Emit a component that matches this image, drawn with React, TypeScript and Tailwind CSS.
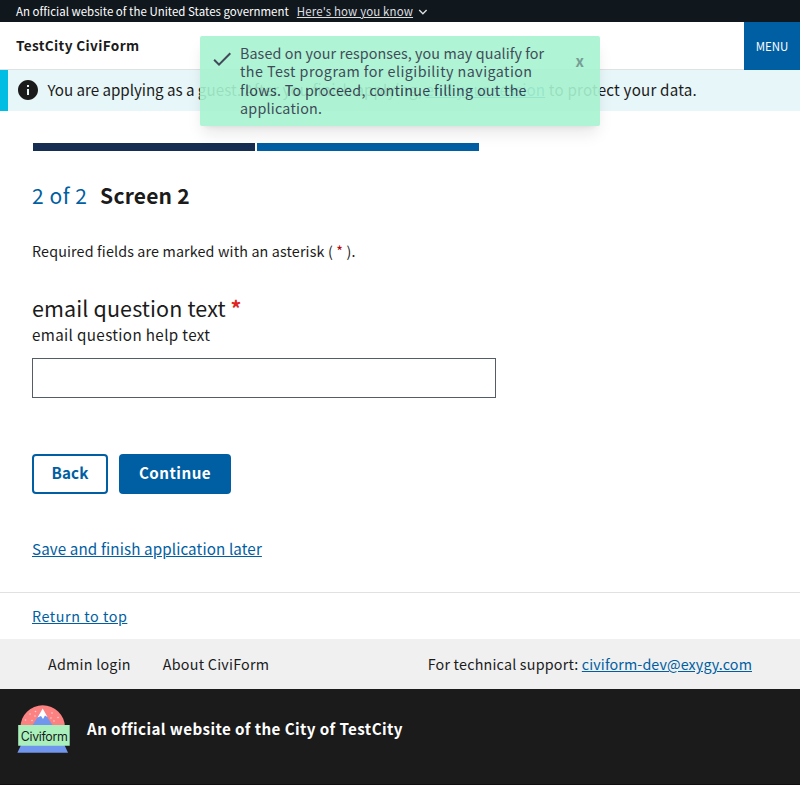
import type { ReactNode } from 'react'

const toastLines = [
  { text: 'Based on your responses, you may qualify for', tracking: 'tracking-[0.08px]' },
  { text: 'the Test program for eligibility navigation', tracking: 'tracking-[0.44px]' },
  { text: 'flows. To proceed, continue filling out the', tracking: 'tracking-[0.28px]' },
  { text: 'application.', tracking: 'tracking-[0.23px]' },
]

function Link({ children, className = '' }: { children: ReactNode; className?: string }) {
  return (
    <a href="#" className={`text-[#005ea2] underline ${className}`}>
      {children}
    </a>
  )
}

function GovBanner() {
  return (
    <div className="flex h-[22px] items-center bg-[#11181d] pl-4 text-[11.46px] leading-[22px] text-white">
      <span className="tracking-[0.02px]">An official website of the United States government</span>
      <button className="ml-2 flex h-[22px] items-center text-[#dcdee0]">
        <span className="tracking-[0.14px] underline">Here's how you know</span>
        <svg className="mt-0.5 ml-1 size-3" viewBox="0 0 24 24" fill="currentColor">
          <path d="M16.59 8.59 12 13.17 7.41 8.59 6 10l6 6 6-6z" transform="translate(-5 -5) scale(1.4)" />
        </svg>
      </button>
    </div>
  )
}

function Header() {
  return (
    <header className="flex h-12 justify-between">
      <div className="flex grow items-center border-b border-[#dfe1e2] pl-4 text-[13.6px] font-bold tracking-[0.36px]">
        TestCity CiviForm
      </div>
      <button className="w-14 bg-[#005ea2] pt-0.5 text-[11.46px] text-white">MENU</button>
    </header>
  )
}

function GuestAlert() {
  return (
    <div className="flex h-[41px] items-center border-l-8 border-[#00bde3] bg-[#e7f6f8] pb-0.5 pl-2">
      <svg className="size-6 shrink-0" viewBox="0 0 24 24" fill="currentColor">
        <path d="M12 2C6.48 2 2 6.48 2 12s4.480 10 10 10 10-4.480 10-10S17.520 2 12 2zm1 15h-2v-6h2v6zm0-8h-2V7h2v2z" />
      </svg>
      <p className="ml-[7.5px] text-[15.18px] whitespace-nowrap">
        <span className="-tracking-[0.04px]">You are applying as a </span>
        <span className="tracking-[0.09px]">
          guest. After you finish applying, <Link>end your session</Link>
        </span>
        <span className="tracking-[0.19px]"> to protect your data.</span>
      </p>
    </div>
  )
}

function Toast() {
  return (
    <div className="absolute top-[36px] left-[200px] flex h-[90px] w-[400px] rounded-xs bg-[#a7f3d0] text-[#2d3748] opacity-90 shadow-lg">
      <svg className="mt-[11px] ml-2.5 size-6 shrink-0" viewBox="0 0 24 24" fill="currentColor">
        <path d="M9 16.170 4.830 12l-1.420 1.410L9 19 21 7l-1.410-1.410z" />
      </svg>
      <p className="mt-2 ml-1.5 grow text-[14.32px] leading-[18.4px] whitespace-nowrap">
        {toastLines.map(({ text, tracking }) => (
          <span key={text} className={`block ${tracking}`}>
            {text}
          </span>
        ))}
      </p>
      <button className="mt-4 mr-4 h-[18px] text-[15px] leading-[18px] font-bold opacity-50">x</button>
    </div>
  )
}

function Logo() {
  return (
    <svg className="h-[50px] w-[54px]" viewBox="0 0 54 50">
      <path d="M4.500 22a22.200 21.700 0 0 1 44.400 0z" fill="#fc8181" />
      <path d="M26.500 4.500 37 21H16z" fill="#7096ee" />
      <path d="M26.700 3.500 31.500 12l-2.500-1.500-2 3.500-2-3-3.500 1.500z" fill="#fff" />
      <g fill="#fed0d0">
        <circle cx="19.500" cy="6.500" r=".8" />
        <circle cx="14" cy="9" r=".8" />
        <circle cx="19" cy="11" r=".8" />
        <circle cx="9.500" cy="15" r=".8" />
        <circle cx="16" cy="15.500" r=".8" />
        <circle cx="36" cy="8" r=".8" />
        <circle cx="35" cy="13" r=".8" />
        <circle cx="42" cy="12.500" r=".8" />
        <circle cx="38" cy="16" r=".8" />
      </g>
      <path d="M5 40h43.500l3.500 7.700H1.400z" fill="#7096ee" />
      <path d="M2.200 20h51.500v20.700H2.200z" fill="#a9f0bc" />
      <text x="4.800" y="35.500" fontSize="12.400" textLength="47" fill="#1b1b1b" fontFamily="Inter, sans-serif">
        Civiform
      </text>
    </svg>
  )
}

export default function App() {
  return (
    <div className="relative h-[785px] overflow-hidden bg-white font-['Noto_Sans_CJK_SC',sans-serif] text-[#1b1b1b]">
      <GovBanner />
      <Header />
      <GuestAlert />

      <main className="h-[481px] px-8 pt-8">
        <div className="flex gap-0.5 pl-px">
          <div className="h-2 w-[222px] bg-[#162e51]" />
          <div className="h-2 w-[222px] bg-[#005ea2]" />
        </div>
        <h1 className="mt-7 flex h-8 items-center text-[21px] leading-8">
          <span className="tracking-[0.55px] text-[#005ea2]">2 of 2</span>
          <span className="ml-[12.5px] font-bold tracking-[0.2px]">Screen 2</span>
        </h1>
        <p className="mt-7 h-6 text-[14.32px] leading-6 tracking-[0.14px]">
          Required fields are marked with an asterisk ( <span className="text-[#b50909]">*</span> ).
        </p>
        <label className="mt-[30px] block h-[30px] text-[21.5px] leading-[30px] tracking-[0.12px]">
          email question text <span className="font-bold text-[#e02424]">*</span>
        </label>
        <p className="-mt-px h-6 text-[15.18px] leading-6 tracking-[0.36px]">email question help text</p>
        <input className="mt-3 block h-10 w-[464px] border border-[#565c65]" />
        <div className="mt-14 flex gap-[11px] text-[15.18px] font-bold">
          <button className="h-10 w-[76px] rounded border-2 border-[#005ea2] pb-[3px] tracking-[0.1px] text-[#005ea2]">
            Back
          </button>
          <button className="h-10 w-28 rounded bg-[#005ea2] pb-[3px] tracking-[0.48px] text-white">Continue</button>
        </div>
        <p className="mt-[42px] text-[15.18px] leading-6 tracking-[0.12px]">
          <Link>Save and finish application later</Link>
        </p>
      </main>

      <footer>
        <div className="flex h-[47px] items-center border-t border-[#dfe1e2] px-8 text-[14.32px] tracking-[0.56px]">
          <Link>Return to top</Link>
        </div>
        <div className="flex h-[50px] items-center bg-[#f0f0f0] px-12 text-[14.32px] tracking-[0.24px]">
          <a href="#">Admin login</a>
          <a href="#" className="ml-8">
            About CiviForm
          </a>
          <p className="ml-auto tracking-[0.2px]">
            For technical support: <Link className="tracking-[0.11px]">civiform-dev@exygy.com</Link>
          </p>
        </div>
        <div className="flex h-24 border-b border-[#120d0e] bg-[#1b1b1b] pt-4 pl-4 text-white">
          <Logo />
          <p className="ml-[17px] h-12 text-[15.18px] leading-[46px] font-bold tracking-[0.4px]">
            An official website of the City of TestCity
          </p>
        </div>
      </footer>

      <Toast />
    </div>
  )
}
